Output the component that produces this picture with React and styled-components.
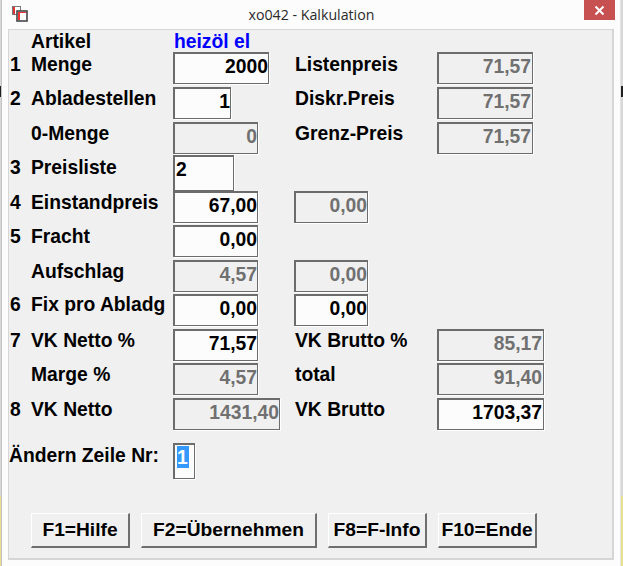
import React from "react";
import styled, { createGlobalStyle } from "styled-components";

const Global = createGlobalStyle`
  html, body { margin: 0; padding: 0; width: 623px; height: 566px; overflow: hidden; background: #fff; }
  #root { width: 623px; height: 566px; }
`;

const Screen = styled.div`
  width: 623px;
  height: 566px;
  display: flex;
  background: linear-gradient(to bottom, #d8d8d8 0 86px, #202020 86px 97px, #d8d8d8 97px 496px, #e8e08a 496px);
`;

const Win = styled.div`
  width: 620px;
  margin-left: 1px;
  height: 566px;
  background: #fcfcfc;
  border-left: 1px solid #c4c4c4;
  border-right: 1px solid #e4e4e4;
  box-sizing: border-box;
  display: flex;
  flex-direction: column;
  font-family: "Liberation Sans", Arial, sans-serif;
`;

const TitleBar = styled.div`
  height: 29px;
  flex: none;
  display: grid;
  grid-template-columns: 1fr auto 1fr;
  align-items: start;
  padding-left: 9px;
  padding-right: 5px;
`;

const AppIcon = styled.svg`
  width: 18px;
  height: 18px;
  margin-top: 5px;
  display: block;
`;

const Title = styled.div`
  font: 14.2px/30px "Open Sans", sans-serif;
  color: #2a2a2a;
  margin-left: -3px;
`;

const Close = styled.div`
  justify-self: end;
  width: 31px;
  height: 20px;
  background: #c75050;
  display: flex;
  align-items: center;
  justify-content: center;
`;

const Client = styled.div`
  width: 606px;
  height: 531px;
  margin-left: 6px;
  box-sizing: border-box;
  border: 2px solid #d6d6d6;
  border-width: 1px 2px 2px 1px;
  background: #f0f0f0;
  display: flex;
  flex-direction: column;
`;

const Row = styled.div`
  display: grid;
  grid-template-columns: 22px 142px 121px 143px 1fr;
  height: ${(p) => p.$h}px;
  align-items: start;
`;

const Num = styled.div`
  font-size: 19.3px;
  font-weight: 700;
  line-height: 22px;
  color: #000;
  padding-left: 1px;
  padding-top: ${(p) => p.$dy || 0}px;
`;

const Label = styled.div`
  font-size: 19.3px;
  font-weight: 700;
  line-height: 22px;
  color: #000;
  white-space: nowrap;
  padding-top: ${(p) => p.$dy || 0}px;
`;

const SideLabel = styled(Label)`
  padding-left: 1px;
`;

const Product = styled(Label)`
  color: #0000ff;
  grid-column: 3 / 5;
  padding-left: 1px;
`;

const Field = styled.div`
  width: ${(p) => p.$w}px;
  height: ${(p) => p.$hh || 32}px;
  box-sizing: border-box;
  border-style: solid;
  border-color: #6c6c6c;
  border-width: 2px 1px 1px 2px;
  box-shadow: 1px 1px 0 #fff;
  background: ${(p) => (p.$off ? "#f0f0f0" : "#fcfcfc")};
  color: ${(p) => (p.$off ? "#707070" : "#000")};
  font-size: 19.3px;
  font-weight: 700;
  line-height: 24px;
  text-align: ${(p) => (p.$left ? "left" : "right")};
  padding: 1px ${(p) => p.$pr || 0}px 0 1px;
  white-space: nowrap;
`;

const Selected = styled.span`
  display: inline-block;
  background: #3399ff;
  color: #fff;
  width: 12px;
  height: 22px;
  line-height: 24px;
  margin-left: 1px;
`;

const EditRow = styled.div`
  display: grid;
  grid-template-columns: 164px auto;
  align-items: start;
  margin-top: 10px;
  height: 70px;
`;

const EditLabel = styled(Label)`
  padding-top: 2px;
`;

const ButtonBar = styled.div`
  display: flex;
  gap: 11px;
  padding-left: 22px;
`;

const Key = styled.div`
  width: ${(p) => p.$w}px;
  height: 35px;
  box-sizing: border-box;
  background: #f0f0f0;
  border-style: solid;
  border-width: 1px 2px 2px 1px;
  border-color: #fff #6f6f6f #6f6f6f #fff;
  font-size: 19.2px;
  font-weight: 700;
  line-height: 31px;
  text-align: center;
  color: #000;
  white-space: nowrap;
`;

const rows = [
  { h: 35, dy: 2, n: "1", l: "Menge", f: { v: "2000", w: 96 }, l2: "Listenpreis", g: { v: "71,57", w: 96, off: 1 } },
  { h: 35, dy: 1, n: "2", l: "Abladestellen", f: { v: "1", w: 58 }, l2: "Diskr.Preis", g: { v: "71,57", w: 96, off: 1 } },
  { h: 33, dy: 1, l: "0-Menge", f: { v: "0", w: 85, off: 1 }, l2: "Grenz-Preis", g: { v: "71,57", w: 96, off: 1 } },
  { h: 36, dy: 2, n: "3", l: "Preisliste", f: { v: "2", w: 61, hh: 36, left: 1 } },
  { h: 34, dy: 1, n: "4", l: "Einstandpreis", f: { v: "67,00", w: 85 }, s: { v: "0,00", w: 74, off: 1 } },
  { h: 35, dy: 1, n: "5", l: "Fracht", f: { v: "0,00", w: 85 } },
  { h: 34, dy: 1, l: "Aufschlag", f: { v: "4,57", w: 85, off: 1 }, s: { v: "0,00", w: 74, off: 1 } },
  { h: 35, n: "6", l: "Fix pro Abladg", f: { v: "0,00", w: 85 }, s: { v: "0,00", w: 74 } },
  { h: 34, dy: 1, n: "7", l: "VK Netto %", f: { v: "71,57", w: 85 }, l2: "VK Brutto %", g: { v: "85,17", w: 107, off: 1 } },
  { h: 35, dy: 1, l: "Marge %", f: { v: "4,57", w: 85, off: 1 }, l2: "total", g: { v: "91,40", w: 107, off: 1 } },
  { h: 35, dy: 1, n: "8", l: "VK Netto", f: { v: "1431,40", w: 107, off: 1 }, l2: "VK Brutto", g: { v: "1703,37", w: 107 } },
];

const Box = ({ d, pr }) => (
  <Field $w={d.w} $hh={d.hh} $off={d.off} $left={d.left} $pr={pr}>
    {d.v}
  </Field>
);

export default function App() {
  return (
    <Screen>
      <Global />
      <Win>
        <TitleBar>
          <AppIcon viewBox="0 0 18 18">
            <rect x="1.5" y="1.5" width="8" height="8" fill="#fff" stroke="#777" />
            <rect x="2" y="2" width="2" height="7" fill="#d33" />
            <rect x="6" y="6" width="10" height="10" fill="#fff" stroke="#444" strokeWidth="1.6" />
            <rect x="7" y="7" width="2" height="8" fill="#e33" />
            <rect x="7" y="7" width="8" height="1" fill="#e33" />
          </AppIcon>
          <Title>xo042 - Kalkulation</Title>
          <Close>
            <svg width="11" height="11" viewBox="0 0 11 11">
              <path d="M1.5 1.5 L9.5 9.5 M9.5 1.5 L1.5 9.5" stroke="#fff" strokeWidth="2" />
            </svg>
          </Close>
        </TitleBar>
        <Client>
          <Row $h={22}>
            <span />
            <Label $dy={1}>Artikel</Label>
            <Product $dy={1}>heizöl el</Product>
          </Row>
          {rows.map((r) => (
            <Row key={r.l} $h={r.h}>
              <Num $dy={r.dy}>{r.n}</Num>
              <Label $dy={r.dy}>{r.l}</Label>
              <Box d={r.f} />
              {r.l2 ? <SideLabel $dy={r.dy}>{r.l2}</SideLabel> : r.s ? <Box d={r.s} /> : <span />}
              {r.g ? <Box d={r.g} pr={1} /> : <span />}
            </Row>
          ))}
          <EditRow>
            <EditLabel>Ändern Zeile Nr:</EditLabel>
            <Field $w={22} $hh={36} $left>
              <Selected>1</Selected>
            </Field>
          </EditRow>
          <ButtonBar>
            <Key $w={99}>F1=Hilfe</Key>
            <Key $w={176}>F2=Übernehmen</Key>
            <Key $w={99}>F8=F-Info</Key>
            <Key $w={99}>F10=Ende</Key>
          </ButtonBar>
        </Client>
      </Win>
    </Screen>
  );
}
